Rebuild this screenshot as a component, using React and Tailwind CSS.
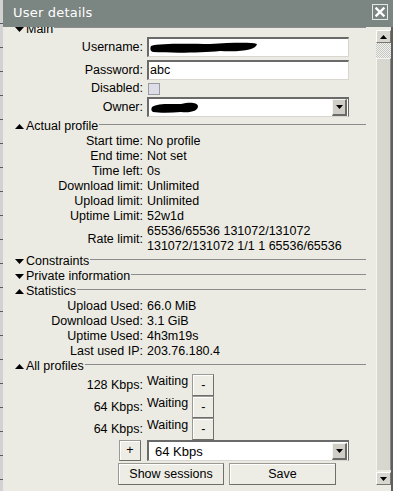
import React from 'react';

const Tri = ({ up, w = 9, h = 5 }) => (
  <svg width={w} height={h} viewBox={`0 0 ${w} ${h}`} className="shrink-0">
    <path d={up ? `M0 ${h} L${w / 2} 0 L${w} ${h}Z` : `M0 0 L${w} 0 L${w / 2} ${h}Z`} fill="#000" />
  </svg>
);

const Section = ({ title, up, className = '' }) => (
  <div className={`flex items-center h-[15px] pl-[12px] pr-[10px] ${className}`}>
    <Tri up={up} />
    <span className="ml-[2px] leading-[15px] whitespace-nowrap">{title}</span>
    <div className="flex-1 h-px bg-[#8c8c8c] ml-[1px] -mt-[4px]" />
  </div>
);

const Row = ({ label, children }) => (
  <div className="flex h-[15px] leading-[15px]">
    <div className="w-[140px] text-right whitespace-nowrap">{label}</div>
    <div className="ml-[4px] whitespace-nowrap">{children}</div>
  </div>
);

const Input = ({ children }) => (
  <div className="w-[202px] h-full bg-white border-t-2 border-l-2 border-[#6a6a6a] border-b border-r border-b-[#d8d6ce] border-r-[#d8d6ce] flex items-center pl-[1px] leading-[15px] relative">
    {children}
  </div>
);

const SelectBox = ({ children }) => (
  <div className="w-[202px] h-full bg-white border-t-2 border-l-2 border-[#6a6a6a] border-b border-r border-b-[#d8d6ce] border-r-[#6a6a6a] flex items-center justify-between leading-[15px]">
    <div className="pl-[1px] flex items-center">{children}</div>
    <div className="w-[15px] h-[17px] mr-[1px] bg-[#cfcdc5] border border-t-[#f4f4f0] border-l-[#f4f4f0] border-b-2 border-r-2 border-b-[#6a6a66] border-r-[#6a6a66] flex items-center justify-center">
      <Tri w={7} h={4} />
    </div>
  </div>
);

const Btn = ({ children, className = '' }) => (
  <div className={`bg-[#edece5] border border-[#9a9a94] border-b-[#6e6e6a] border-r-[#6e6e6a] shadow-[inset_1px_1px_0_#fff] flex items-center justify-center leading-[15px] ${className}`}>
    {children}
  </div>
);

const Blob = ({ w, d }) => (
  <svg width={w} height="11" viewBox={`0 0 ${w} 11`}>
    <path d={d} fill="#000" />
  </svg>
);

export default function App() {
  return (
    <div className="w-[393px] h-[491px] flex bg-[#ecebe3] overflow-hidden font-['Liberation_Sans',Arial,sans-serif] text-[12.5px] text-black">
      {/* page behind the window */}
      <div className="w-[3px] h-full bg-[#d2d2d2] bg-[repeating-linear-gradient(to_bottom,#d2d2d2_0px,#d2d2d2_23px,#5a5a5a_23px,#5a5a5a_24px)]" />

      <div className="flex-1 flex flex-col">
        {/* title bar */}
        <div className="h-[27px] bg-[#7b8581] flex items-start justify-between shrink-0">
          <span className="ml-[10px] mt-[4px] text-white text-[13px] leading-[17px] font-['DejaVu_Sans',sans-serif] tracking-[0.2px]">
            User details
          </span>
          <div className="mt-[4px] mr-[5px] w-[16px] h-[16px] border border-[#e6e6e6] flex items-center justify-center">
            <svg width="10" height="10" viewBox="0 0 10 10">
              <path d="M1.5 1.5 L8.5 8.5 M8.5 1.5 L1.5 8.5" stroke="#fff" strokeWidth="2.4" strokeLinecap="square" />
            </svg>
          </div>
        </div>

        <div className="flex-1 flex min-h-0">
          {/* content */}
          <div className="flex-1 overflow-hidden">
            <div className="-mt-[5px] flex flex-col">
              <Section title="Main" />
              <div className="flex h-[20px] leading-[15px]">
                <div className="w-[140px] text-right self-center">Username:</div>
                <div className="ml-[4px]">
                  <Input>
                    <div className="flex items-center">
                      <Blob w={108} d="M1 4 C 10 1, 40 2, 60 2 C 80 1, 100 0, 107 2 C 106 8, 92 10, 70 9 C 50 11, 20 11, 3 10 C 0 9, 0 6, 1 4Z" />
                    </div>
                  </Input>
                </div>
              </div>
              <div className="flex h-[20px] mt-[3px] leading-[15px]">
                <div className="w-[140px] text-right self-center">Password:</div>
                <div className="ml-[4px]">
                  <Input>abc</Input>
                </div>
              </div>
              <div className="flex h-[17px] items-center leading-[15px]">
                <div className="w-[140px] text-right">Disabled:</div>
                <div className="ml-[5px] w-[12px] h-[12px] bg-[#dcdde6] border border-[#9a9aa4]" />
              </div>
              <div className="flex h-[20px] leading-[15px]">
                <div className="w-[140px] text-right self-center">Owner:</div>
                <div className="ml-[4px]">
                  <SelectBox>
                    <div className="ml-[1px] flex items-center">
                      <Blob w={48} d="M1 5 C 6 1, 20 2, 30 2 C 38 0, 46 0, 47 4 C 47 9, 40 11, 30 10 C 20 11, 8 11, 2 10 C 0 9, 0 7, 1 5Z" />
                    </div>
                  </SelectBox>
                </div>
              </div>

              <Section title="Actual profile" up className="mt-[2px]" />
              <Row label="Start time:">No profile</Row>
              <Row label="End time:">Not set</Row>
              <Row label="Time left:">0s</Row>
              <Row label="Download limit:">Unlimited</Row>
              <Row label="Upload limit:">Unlimited</Row>
              <Row label="Uptime Limit:">52w1d</Row>
              <div className="flex h-[30px] leading-[15px]">
                <div className="w-[140px] text-right self-center">Rate limit:</div>
                <div className="ml-[4px] whitespace-nowrap">
                  <div>65536/65536 131072/131072</div>
                  <div>131072/131072 1/1 1 65536/65536</div>
                </div>
              </div>

              <Section title="Constraints" />
              <Section title="Private information" />
              <Section title="Statistics" up />
              <Row label="Upload Used:">66.0 MiB</Row>
              <Row label="Download Used:">3.1 GiB</Row>
              <Row label="Uptime Used:">4h3m19s</Row>
              <Row label="Last used IP:">203.76.180.4</Row>

              <Section title="All profiles" up />
              {['128 Kbps:', '64 Kbps:', '64 Kbps:'].map((p, i) => (
                <div key={i} className="flex h-[22px] leading-[15px]">
                  <div className="w-[140px] text-right self-center mt-[1px]">{p}</div>
                  <div className="ml-[4px]">Waiting</div>
                  <Btn className="ml-[4px] w-[22px] h-[22px]">-</Btn>
                </div>
              ))}
              <div className="flex h-[21px] leading-[15px]">
                <div className="w-[140px] flex justify-end">
                  <Btn className="w-[22px] h-[21px] mr-[2px]">+</Btn>
                </div>
                <div className="ml-[4px]">
                  <SelectBox>
                    <span className="ml-[5px] text-[13px]">64 Kbps</span>
                  </SelectBox>
                </div>
              </div>
              <div className="flex mt-[2px] ml-[115px] gap-[5px]">
                <Btn className="w-[106px] h-[22px]">Show sessions</Btn>
                <Btn className="w-[107px] h-[22px]">Save</Btn>
              </div>
            </div>
          </div>

          {/* scrollbar */}
          <div className="w-[15px] flex flex-col shrink-0">
            <div className="mt-[3px] h-[13px] bg-[#d8d6ce] border border-t-white border-l-white border-b-[#77776f] border-r-[#77776f] flex items-center justify-center">
              <Tri up w={7} h={4} />
            </div>
            <div className="h-[15px] bg-[image:repeating-conic-gradient(#c4c4c0_0%_25%,#f2f2ee_0%_50%)] bg-[length:2px_2px]" />
            <div className="flex-1 bg-[#d8d7cf] border-t border-l border-t-[#f4f4f0] border-l-[#f4f4f0] border-r border-r-[#8a8a84]" />
            <div className="mt-[2px] mb-[6px] h-[13px] bg-[#d8d6ce] border border-t-white border-l-white border-b-[#77776f] border-r-[#77776f] flex items-center justify-center">
              <Tri w={7} h={4} />
            </div>
          </div>
          <div className="w-[2px] bg-[#5e5e5e] shrink-0" />
        </div>
      </div>
    </div>
  );
}
